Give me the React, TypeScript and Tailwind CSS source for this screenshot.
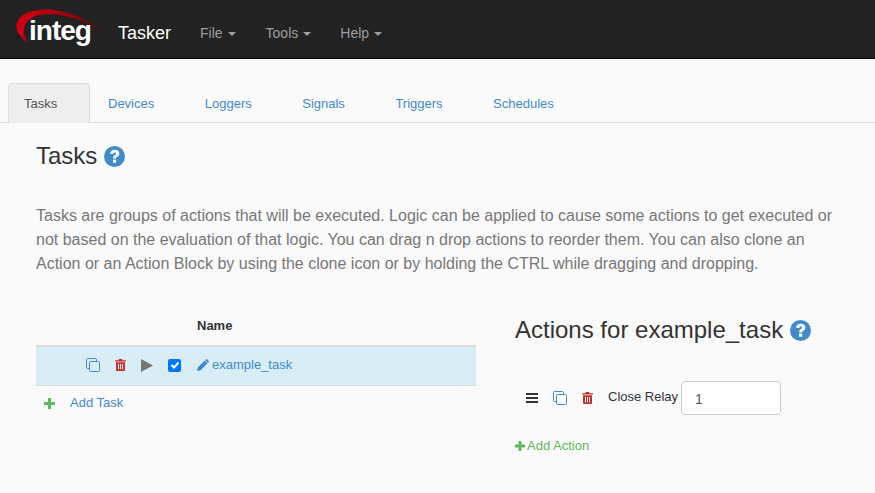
import React from "react";

const sans = "font-['Liberation_Sans',Arial,sans-serif]";

function Copy({ className = "" }: { className?: string }) {
  return (
    <svg width="14" height="14" viewBox="0 0 14 14" fill="none" stroke="currentColor" strokeWidth="1" className={className}>
      <path d="M3.5 10.5H1.5C1 10.5 .5 10 .5 9.5V1.5C.5 1 1 .5 1.5 .5H9.5C10 .5 10.5 1 10.5 1.5V3.5" />
      <rect x="3.5" y="3.5" width="10" height="10" rx="1" />
    </svg>
  );
}

function Trash() {
  return (
    <svg width="11" height="12" viewBox="0 0 11 12" fill="#c9302c" className="block">
      <path d="M4 0h3l.6 1.2H11v1.3H0V1.2h3.4z" />
      <path fillRule="evenodd" d="M1 3.3h9V11a1 1 0 0 1-1 1H2a1 1 0 0 1-1-1zM3 5v5.2h1V5zm2 0v5.2h1V5zm2 0v5.2h1V5z" />
    </svg>
  );
}

function Help({ size }: { size: number }) {
  return (
    <svg width={size} height={size} viewBox="0 0 20 20" className="block">
      <circle cx="10" cy="10" r="10" fill="#428bca" />
      <path d="M5.8 7.4C6 4.9 7.8 3.5 10.3 3.5c2.5 0 4.3 1.5 4.3 3.6 0 1.6-.8 2.4-2 3.1-.9.6-1.1.9-1.1 1.7H8.7c0-1.7.4-2.4 1.5-3.1.8-.5 1.2-.9 1.2-1.5 0-.7-.5-1.2-1.2-1.2-.8 0-1.3.5-1.4 1.4z" fill="#fff" />
      <rect x="8.6" y="13" width="3" height="3" fill="#fff" />
    </svg>
  );
}

function Plus({ size }: { size: number }) {
  return (
    <svg width={size} height={size} viewBox="0 0 10 10" fill="#5cb85c" className="block">
      <path d="M3.6 0h2.8v3.6H10v2.8H6.4V10H3.6V6.4H0V3.6h3.6z" />
    </svg>
  );
}

function Caret() {
  return <span className="ml-[5px] inline-block w-0 h-0 border-x-[4px] border-x-transparent border-t-[4px] border-t-[#9d9d9d] align-middle" />;
}

export default function App() {
  const tabs = ["Devices", "Loggers", "Signals", "Triggers", "Schedules"];
  return (
    <div className={`${sans} w-[875px] h-[493px] overflow-hidden bg-[#fafafa] text-[#333] text-sm`}>
      <nav className="h-[59px] bg-[#222] border-b border-[#080808] flex items-center pt-[7px]">
        <div className="relative w-[118px] h-[52px] shrink-0">
          <svg width="110" height="58" viewBox="0 0 110 58" className="absolute left-0 top-[-7px]">
            <defs>
              <linearGradient id="arc" x1="0" x2="1" y1="0" y2="0">
                <stop offset="0" stopColor="#d0000f" />
                <stop offset="1" stopColor="#7a0008" />
              </linearGradient>
            </defs>
            <path d="M28 43C13 33 11 17 32 11C52 6 80 13 102 31C82 18 56 12 40 15C26 18 19 29 28 43Z" fill="url(#arc)" />
          </svg>
          <span className="absolute left-[29px] top-[7px] text-[28px] leading-[34px] font-bold tracking-[-1px] text-white">integ</span>
        </div>
        <span className="text-lg text-white mr-[29px]">Tasker</span>
        <span className="text-[#9d9d9d] mr-[30px] text-[14px]">File<Caret /></span>
        <span className="text-[#9d9d9d] mr-[29px] text-[14px]">Tools<Caret /></span>
        <span className="text-[#9d9d9d] text-[14px]">Help<Caret /></span>
      </nav>

      <div className="mt-6 h-[40px] border-b border-[#ddd] flex pl-2 text-[13px]">
        <div className="h-[40px] w-[82px] pl-[15px] pt-[11px] bg-[#eee] border border-b-0 border-[#ddd] rounded-t text-[#555]">Tasks</div>
        <div className="flex gap-[50.5px] pl-[18px] pt-3 text-[#428bca]">
          {tabs.map((t) => <span key={t}>{t}</span>)}
        </div>
      </div>

      <div className="px-9">
        <div className="flex items-center gap-[7px] mt-[17px] h-[32px]">
          <h1 className="text-2xl font-normal leading-none">Tasks</h1>
          <Help size={21} />
        </div>
        <p className="mt-[32px] text-base leading-[24px] text-[#777] w-[810px]">
          Tasks are groups of actions that will be executed. Logic can be applied to cause some actions to get executed or not based on the evaluation of that logic. You can drag n drop actions to reorder them. You can also clone an Action or an Action Block by using the clone icon or by holding the CTRL while dragging and dropping.
        </p>

        <div className="flex mt-[24px]">
          <div className="w-[440px]">
            <div className="h-[47px] border-b-2 border-[#ddd] pl-[161px] pt-[16px] text-[13px] font-bold leading-[20px]">Name</div>
            <div className="h-[39px] pb-[2px] bg-[#d9edf7] border-b border-[#ddd] flex items-center text-[#428bca] pl-[50px]">
              <Copy />
              <span className="ml-[15px]"><Trash /></span>
              <svg width="12" height="13" viewBox="0 0 12 13" className="ml-[15px]"><path d="M0 0l12 6.5L0 13z" fill="#777" /></svg>
              <span className="ml-[15px] w-[13px] h-[13px] rounded-[2px] bg-[#0075ff] flex items-center justify-center">
                <svg width="10" height="10" viewBox="0 0 10 10" fill="none" stroke="#fff" strokeWidth="2"><path d="M1.5 5l2.5 2.5 4.5-5" /></svg>
              </span>
              <svg width="12" height="12" viewBox="0 0 12 12" className="ml-[16px]" fill="#428bca"><path d="M0 12l.8-3.6L7.8 1.4l2.8 2.8-7 7zM8.6.6c.5-.6 1.2-.6 1.7-.1l1.2 1.2c.5.5.5 1.2 0 1.7l-.5.5-2.8-2.8z" /></svg>
              <span className="ml-[3px] text-[13px]">example_task</span>
            </div>
            <div className="flex items-center h-[34px] pl-[8px] text-[#428bca] text-[13px]">
              <Plus size={11} />
              <span className="ml-[15px]">Add Task</span>
            </div>
          </div>
          <div className="ml-[39px] flex-1">
            <div className="flex items-center gap-[7px] mt-[14px] h-[32px]">
              <h2 className="text-[24px] font-normal leading-none">Actions for example_task</h2>
              <Help size={21} />
            </div>
            <div className="flex items-center mt-[35px] h-[34px]">
              <svg width="12" height="10" viewBox="0 0 12 10" className="ml-[11px]" fill="#333"><rect width="12" height="2" /><rect y="4" width="12" height="2" /><rect y="8" width="12" height="2" /></svg>
              <Copy className="ml-[15px] text-[#428bca]" />
              <span className="ml-[15px]"><Trash /></span>
              <span className="ml-[15px] mb-[2px] text-[13px]">Close Relay</span>
              <div className="ml-[3px] w-[100px] h-[34px] border border-[#ccc] rounded bg-white pl-[13px] leading-[34px] text-[#555]">1</div>
            </div>
            <div className="flex items-center mt-[22px] text-[#5cb85c] text-[13px] h-[18px]">
              <Plus size={10} />
              <span className="ml-[2px]">Add Action</span>
            </div>
          </div>
        </div>
      </div>
    </div>
  );
}
